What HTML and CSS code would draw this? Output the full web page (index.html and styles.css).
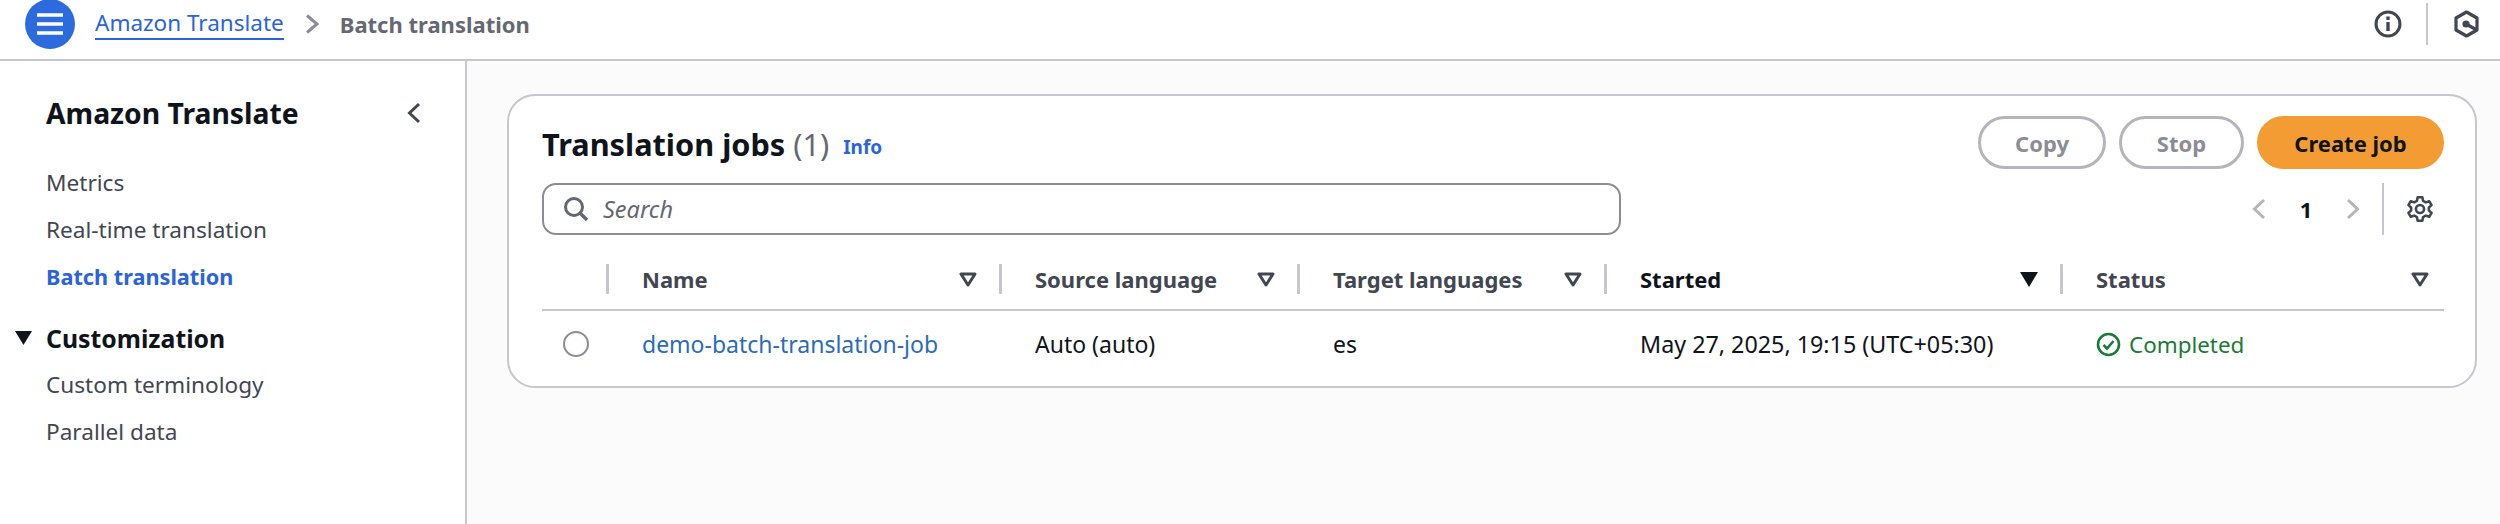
FILE: index.html
```html
<!DOCTYPE html>
<html lang="en">
<head>
<meta charset="utf-8">
<title>Batch translation</title>
<link rel="stylesheet" href="styles.css">
</head>
<body>
<header class="topbar">
  <button class="menu" aria-label="Menu">
    <svg width="26" height="24" viewBox="0 0 26 24"><path d="M0 3h26M0 12h26M0 21h26" stroke="#fff" stroke-width="3.4"/></svg>
  </button>
  <a class="crumb">Amazon Translate</a>
  <svg class="crumb-sep" width="14" height="20" viewBox="0 0 14 20"><path d="M2 1.5 12 10 2 18.5" fill="none" stroke="#8c8c94" stroke-width="3"/></svg>
  <span class="crumb-current">Batch translation</span>
  <div class="top-tools">
    <svg width="28" height="28" viewBox="0 0 28 28"><circle cx="14" cy="14" r="12" fill="none" stroke="#424650" stroke-width="3"/><path d="M14 12v9" stroke="#424650" stroke-width="3.4"/><path d="M14 6.500v3.400" stroke="#424650" stroke-width="3.4"/></svg>
    <span class="top-divider"></span>
    <svg width="25" height="28" viewBox="0 0 25 28"><path d="M12.500 2 23 8v12l-10.500 6L2 20V8Z" fill="none" stroke="#424650" stroke-width="3.2" stroke-linejoin="round"/><path d="M12 14l10 5.500" stroke="#424650" stroke-width="3.2"/><circle cx="12" cy="14" r="3.600" fill="#424650"/></svg>
  </div>
</header>
<div class="layout">
  <nav class="sidebar">
    <div class="side-head">
      <h2>Amazon Translate</h2>
      <svg width="14" height="22" viewBox="0 0 14 22"><path d="M12 2 2.500 11 12 20" fill="none" stroke="#424650" stroke-width="3"/></svg>
    </div>
    <ul class="side-list">
      <li>Metrics</li>
      <li>Real-time translation</li>
      <li class="active">Batch translation</li>
    </ul>
    <div class="side-section">
      <svg width="17" height="14" viewBox="0 0 17 14"><path d="M0 0h17L8.500 14Z" fill="#0f141a"/></svg>
      <span>Customization</span>
    </div>
    <ul class="side-list sub">
      <li>Custom terminology</li>
      <li>Parallel data</li>
    </ul>
  </nav>
  <main class="content">
    <section class="card">
      <div class="card-head">
        <h1>Translation jobs <span class="count">(1)</span></h1>
        <a class="info">Info</a>
        <div class="actions">
          <button class="btn copy">Copy</button>
          <button class="btn stop">Stop</button>
          <button class="btn primary">Create job</button>
        </div>
      </div>
      <div class="tools">
        <div class="search">
          <svg width="26" height="26" viewBox="0 0 26 26"><circle cx="11" cy="11" r="8.500" fill="none" stroke="#656871" stroke-width="3"/><path d="M17 17l7 7" stroke="#656871" stroke-width="3.4"/></svg>
          <span>Search</span>
        </div>
        <div class="pager">
          <svg class="pg-prev" width="14" height="22" viewBox="0 0 14 22"><path d="M12 2 2.500 11 12 20" fill="none" stroke="#b4b4bb" stroke-width="3"/></svg>
          <span class="page">1</span>
          <svg class="pg-next" width="14" height="22" viewBox="0 0 14 22"><path d="M2 2 11.500 11 2 20" fill="none" stroke="#b4b4bb" stroke-width="3"/></svg>
          <span class="pg-divider"></span>
          <svg width="28" height="30" viewBox="0 0 24 24" fill="none" stroke="#424650" stroke-width="2.200" stroke-linejoin="round"><circle cx="12" cy="12" r="3.500"/><path d="M10 2h4l.6 3 2.400 1.300 2.900-1 2 3.400-2.300 2v2.600l2.300 2-2 3.400-2.900-1-2.400 1.300-.6 3h-4l-.6-3L7 17.700l-2.900 1-2-3.400 2.300-2v-2.600l-2.300-2 2-3.400 2.900 1L9.400 5Z"/></svg>
        </div>
      </div>
      <div class="grid head">
        <div class="cell blank"></div>
        <div class="cell"><span>Name</span><svg class="filter" width="18" height="15" viewBox="0 0 18 15"><path d="M2 2h14L9 13Z" fill="none" stroke="#424650" stroke-width="3" stroke-linejoin="round"/></svg></div>
        <div class="cell"><span>Source language</span><svg class="filter" width="18" height="15" viewBox="0 0 18 15"><path d="M2 2h14L9 13Z" fill="none" stroke="#424650" stroke-width="3" stroke-linejoin="round"/></svg></div>
        <div class="cell"><span>Target languages</span><svg class="filter" width="18" height="15" viewBox="0 0 18 15"><path d="M2 2h14L9 13Z" fill="none" stroke="#424650" stroke-width="3" stroke-linejoin="round"/></svg></div>
        <div class="cell sorted"><span>Started</span><svg class="filter" width="18" height="15" viewBox="0 0 18 15"><path d="M0 0h18L9 15Z" fill="#0f141a"/></svg></div>
        <div class="cell"><span>Status</span><svg class="filter" width="18" height="15" viewBox="0 0 18 15"><path d="M2 2h14L9 13Z" fill="none" stroke="#424650" stroke-width="3" stroke-linejoin="round"/></svg></div>
      </div>
      <div class="grid row">
        <div class="cell"><span class="radio"></span></div>
        <div class="cell"><a class="job">demo-batch-translation-job</a></div>
        <div class="cell">Auto (auto)</div>
        <div class="cell">es</div>
        <div class="cell started">May 27, 2025, 19:15 (UTC+05:30)</div>
        <div class="cell done">
          <svg width="25" height="25" viewBox="0 0 25 25"><circle cx="12.500" cy="12.500" r="10.500" fill="none" stroke="#1b7a36" stroke-width="2.600"/><path d="M7.500 13l3.500 3.500 6.500-7.500" fill="none" stroke="#1b7a36" stroke-width="2.600"/></svg>
          <span>Completed</span>
        </div>
      </div>
    </section>
  </main>
</div>
</body>
</html>
```

FILE: styles.css
```css
* { box-sizing: border-box; }
html, body { margin: 0; height: 100%; }
body {
  font-family: "Noto Sans", "Liberation Sans", sans-serif;
  font-size: 22px;
  color: #0f141a;
  background: #fff;
  display: flex;
  flex-direction: column;
  height: 524px;
  overflow: hidden;
}
h1, h2 { margin: 0; }
ul { list-style: none; margin: 0; padding: 0; }
button { font: inherit; }

.topbar {
  display: flex;
  align-items: center;
  height: 61px;
  padding: 0 21px 11px 25px;
  border-bottom: 2px solid #c6c6cd;
}
.menu {
  width: 50px; height: 50px;
  border: 0; border-radius: 50%;
  background: #2b6bdd;
  display: flex; align-items: center; justify-content: center;
  padding: 0;
}
.crumb {
  margin-left: 20px;
  font-size: 22.5px;
  color: #2b63d9;
  line-height: 30px;
  border-bottom: 2px solid #2b63d9;
}
.crumb-sep { margin: 0 21px; }
.crumb-current { font-weight: 700; color: #656871; }
.top-tools { margin-left: auto; display: flex; align-items: center; }
.top-divider { width: 2px; height: 42px; background: #c6c6cd; margin: 0 26px 0 24px; }

.layout { flex: 1; display: flex; min-height: 0; }
.sidebar {
  width: 467px;
  flex: none;
  border-right: 2px solid #c6c6cd;
  padding: 32px 0 0 46px;
  background: #fff;
}
.side-head {
  display: flex; align-items: center; justify-content: space-between;
  height: 40px;
  padding-right: 44px;
}
.side-head h2 { font-size: 28.3px; font-weight: 700; }
.side-list { margin-top: 26px; color: #424650; font-size: 22.6px; }
.side-list li { height: 47px; line-height: 47px; }
.side-list .active { color: #2b63d9; font-weight: 700; font-size: 21.7px; }
.side-list.sub { margin-top: 0; }
.side-section {
  display: flex; align-items: center;
  height: 47px;
  margin: 14px 0 0 -31px;
  font-weight: 700;
  font-size: 24.8px;
}
.side-section svg { margin-right: 14px; }

.content { flex: 1; background: #fbfbfb; padding: 33px 23px 0 40px; }
.card {
  background: #fff;
  border: 2px solid #c6c6cd;
  border-radius: 28px;
  height: 294px;
  padding: 20px 31px 0 33px;
}
.card-head { display: flex; align-items: center; height: 53px; }
.card-head h1 { font-size: 30.7px; font-weight: 700; margin-top: 2px; }
.count { font-weight: 400; color: #656871; }
.info { margin: 9px 0 0 14px; font-size: 19px; font-weight: 700; color: #2b63d9; }
.actions { margin-left: auto; display: flex; gap: 13px; }
.btn {
  height: 53px;
  border-radius: 27px;
  border: 3px solid #b4b4bb;
  background: #fff;
  color: #8c8c94;
  font-size: 22px;
  font-weight: 700;
  padding: 0;
}
.copy { width: 128px; }
.stop { width: 125px; }
.primary { width: 187px; background: #f39c34; border-color: #f39c34; color: #0f141a; }

.tools { display: flex; align-items: center; margin-top: 14px; height: 52px; }
.search {
  width: 1079px; height: 52px;
  border: 2px solid #8c8c94;
  border-radius: 14px;
  display: flex; align-items: center;
  padding-left: 19px;
  color: #656871;
  font-style: italic;
  font-size: 23.5px;
}
.search span { margin-left: 14px; }
.pager { margin-left: auto; display: flex; align-items: center; padding-right: 10px; }
.page { width: 80px; text-align: center; font-weight: 700; }
.pg-divider { width: 2px; height: 52px; background: #c6c6cd; margin: 0 22px; }

.grid {
  display: grid;
  grid-template-columns: 64px 393px 298px 307px 456px 384px;
}
.head { margin-top: 15px; height: 61px; border-bottom: 2px solid #c6c6cd; padding-top: 14px; }
.head .cell {
  height: 30px;
  display: flex; align-items: center; justify-content: space-between;
  border-left: 3px solid #c6c6cd;
  padding: 0 22px 0 33px;
  font-weight: 700;
  color: #424650;
}
.head .blank { border-left: 0; }
.head .sorted { color: #0f141a; }
.head .cell:last-child { padding-right: 15px; }
.row { height: 66px; align-items: center; }
.row .cell { padding-left: 36px; display: flex; align-items: center; font-size: 23px; }
.row .cell:first-child { padding-left: 21px; }
.row .started { font-size: 23.3px; }
.radio { width: 26px; height: 26px; border: 2px solid #8c8c94; border-radius: 50%; display: block; }
.job { color: #2a6cb5; }
.row .done { color: #1b7a36; gap: 8px; font-size: 22.4px; }
```
